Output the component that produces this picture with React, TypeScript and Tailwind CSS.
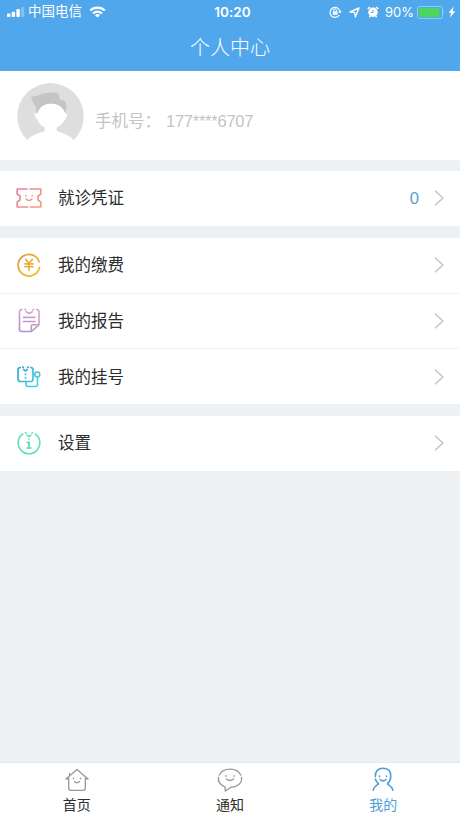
import type { ReactNode } from "react";

function StatusBar() {
  return (
    <div className="flex h-6 items-center justify-between pl-[7px] pr-[4px] text-white">
      <div className="flex flex-1 items-center">
        <svg width="18" height="10" viewBox="0 0 18 10" fill="currentColor">
          <rect x="0" y="6.5" width="3.4" height="3.5" rx="0.8" />
          <rect x="4.7" y="4.7" width="3.4" height="5.3" rx="0.8" />
          <rect x="9.4" y="2" width="3.4" height="8" rx="0.8" />
          <rect x="14.1" y="0" width="3.2" height="10" rx="0.8" opacity="0.3" />
        </svg>
        <span className="ml-[3px] text-[13.5px] leading-none">中国电信</span>
        <svg className="ml-[7px]" width="17" height="12" viewBox="0 0 17 12" fill="none" stroke="currentColor" strokeWidth="2.1">
          <path d="M1.2 4.6a10.4 10.4 0 0 1 14.6 0" />
          <path d="M4 7.5a6.4 6.4 0 0 1 9 0" />
          <path d="M8.5 11.6 6 9.2a3.5 3.5 0 0 1 5 0z" fill="currentColor" stroke="none" />
        </svg>
      </div>
      <span className="pl-[2px] pt-px font-[Inter] text-[13.5px] font-semibold leading-none tracking-[0.1px]">10:20</span>
      <div className="flex flex-1 items-center justify-end">
        <svg width="13" height="12" viewBox="0 0 13 12" fill="none" stroke="currentColor">
          <path d="M10.2 9.2a5 5 0 1 1 .8-3.5" strokeWidth="1.2" />
          <path d="M9.2 5.2h3.6L11 7.6z" fill="currentColor" stroke="none" />
          <rect x="3.7" y="5.2" width="4.8" height="3.6" rx="0.4" fill="currentColor" stroke="none" />
          <path d="M4.8 5.4V4.2a1.3 1.3 0 0 1 2.6 0v1.2" />
        </svg>
        <svg className="ml-[7px]" width="11" height="11" viewBox="0 0 11 11" fill="none" stroke="currentColor" strokeWidth="1.4" strokeLinejoin="round">
          <path d="M10 1 6.4 10 5.6 5.4 1 5z" />
        </svg>
        <svg className="ml-[7px]" width="12" height="12" viewBox="0 0 12 12" fill="none">
          <circle cx="6" cy="6.3" r="4.7" fill="currentColor" />
          <path d="M.8 3 3 1M9 1l2.2 2M2.4 11.2l1-1.2M9.6 11.2l-1-1.2" stroke="currentColor" strokeWidth="1.6" />
          <path d="M6 3.7v2.8H4" stroke="#50a7eb" />
        </svg>
        <span className="ml-[6px] font-[Inter] text-[13px] leading-none">90%</span>
        <svg className="ml-[3px]" width="28" height="13" viewBox="0 0 28 13" fill="none">
          <rect x="0.5" y="0.5" width="25" height="12" rx="2.3" stroke="#8fcdee" />
          <rect x="2" y="2" width="20.5" height="9" rx="1" fill="#4cd65b" />
          <path d="M26.6 4.3q1.4 2.2 0 4.4z" fill="#9fd3ef" />
        </svg>
        <svg className="ml-[3px]" width="8" height="12" viewBox="0 0 8 12" fill="currentColor">
          <path d="M5.7.5.5 6.7h2.6L2 11.5l5.3-6.3H4.6z" />
        </svg>
      </div>
    </div>
  );
}

function Avatar() {
  return (
    <svg className="flex-none" width="67" height="67" viewBox="0 0 67 67">
      <circle cx="33.5" cy="33.3" r="33.2" fill="#dedede" />
      {/* head, neck and shoulders */}
      <path
        d="M19.5 31C21 24 27 20.6 34 20.6S47.5 24 48.5 31L50 30Q50.5 33.5 48.3 36.5C46.5 39.5 43 43 39.7 44.5V48L49 51.5Q54 53.5 57.2 57.5V67H10V57.5Q13.5 53 18.5 51.2L27.7 48V44.5C24 43 21.5 40 20.3 36.5Q17 33.5 17.8 30z"
        fill="#fff"
      />
      <path
        d="M14.3 13.2Q18.5 14.5 23 11.5 31 8.8 40 9.8 43 12.5 42.5 16.6 48.8 16.5 49.4 22 49.5 26.5 48.3 30.5C46.5 24.5 41 20.5 34 20.5S22 24.5 20.5 30.5Q18.3 28 19 23.5 14.5 18.5 14.3 13.2z"
        fill="#c5c5c5"
      />
    </svg>
  );
}

function TicketIcon() {
  return (
    <svg width="26" height="20" viewBox="0 0 26 20" fill="none" stroke="url(#ticket)" strokeWidth="1.7" strokeLinecap="round" strokeLinejoin="round">
      <defs>
        <linearGradient id="ticket" x1="0" y1="0" x2="26" y2="20" gradientUnits="userSpaceOnUse">
          <stop stopColor="#e17fa5" />
          <stop offset="1" stopColor="#f5a27b" />
        </linearGradient>
      </defs>
      <path d="M11 1H1.2v5L4 8v4l-2.8 2v5h10.5M14.5 19h10.3v-5L22 12V8l2.8-2V1H14" />
      <path d="M9.8 7.5v.5M16.2 7.5v.5M10 11q3 3 6 0" strokeWidth="1.4" />
    </svg>
  );
}

function YuanIcon() {
  return (
    <svg width="24" height="24" viewBox="0 0 24 24" fill="none" stroke="url(#yuan)" strokeLinecap="round">
      <defs>
        <linearGradient id="yuan" x1="0" y1="0" x2="24" y2="24" gradientUnits="userSpaceOnUse">
          <stop stopColor="#df9340" />
          <stop offset="1" stopColor="#f2ca32" />
        </linearGradient>
      </defs>
      <path d="M22.2 8.8A10.8 10.8 0 1 0 22.5 14.5" strokeWidth="1.8" />
      <path d="m8.8 6.5 3.2 4 3.2-4M8 10.8h8M8 13.7h8M12 10.8v6.5" strokeWidth="1.7" />
    </svg>
  );
}

function ReportIcon() {
  return (
    <svg width="23" height="25" viewBox="0 0 23 25" fill="none" stroke="url(#report)" strokeWidth="1.6" strokeLinecap="round" strokeLinejoin="round">
      <defs>
        <linearGradient id="report" x1="18" y1="0" x2="6" y2="25" gradientUnits="userSpaceOnUse">
          <stop stopColor="#dfa9c7" />
          <stop offset="1" stopColor="#aa91cc" />
        </linearGradient>
      </defs>
      <path d="M4 1.5Q1.500 1.500 1.500 4v17.500q0 2 2 2h9.800l7.700-6.700V4q0-2.500-2.500-2.500M7 1.300l.5.700M15.500 1.300l-.5.700M8.300 3.700l3 1.800 3-1.800" />
      <path d="M5.500 9.300h11.500M5.500 13.500h11.500" strokeWidth="1.7" />
      <path d="M13.300 23.300V18q0-1.200 1.300-1.200h6" />
    </svg>
  );
}

function RegisterIcon() {
  return (
    <svg width="24" height="22" viewBox="0 0 24 22" fill="none" stroke="url(#register)" strokeWidth="1.7" strokeLinecap="round" strokeLinejoin="round">
      <defs>
        <linearGradient id="register" x1="0" y1="0" x2="22" y2="20" gradientUnits="userSpaceOnUse">
          <stop stopColor="#3b9fd0" />
          <stop offset="1" stopColor="#49d4e2" />
        </linearGradient>
      </defs>
      <path d="M3.3 1.5Q1 1.5 1 4v9q0 2.500 2.500 2.500h10Q16 15.500 16 13V4q0-2.500-2.300-2.500M5.800 1l.5.600M11.200 1l-.5.600M6.800 3.700l1.700 1.300 1.700-1.300M8.500 8v.5M8.500 11.500v.5" />
      <path d="M9 15.500v3q0 2 2 2h7.500q2 0 2-2v-7.200" strokeWidth="1.5" />
      <circle cx="20.3" cy="8.6" r="2.5" strokeWidth="1.5" />
    </svg>
  );
}

function InfoIcon() {
  return (
    <svg width="24" height="24" viewBox="0 0 24 24" fill="none" stroke="#68dfba" strokeWidth="1.6" strokeLinecap="round">
      <path d="M5.700 3a10.900 10.900 0 1 0 12.600 0M8.600 1.500l.4.600M15.400 1.500l-.4.600M10 4.200l2 1.500 2-1.500" />
      <path d="M12 8v.3" strokeWidth="1.6" />
      <path d="M10.500 11.600H12v5.200M10.500 17H13.600" strokeWidth="2" />
    </svg>
  );
}

function HomeIcon() {
  return (
    <svg width="24" height="24" viewBox="0 0 24 24" fill="none" stroke="currentColor" strokeWidth="1.3" strokeLinecap="round" strokeLinejoin="round">
      <path d="M4.500 8V5.500M1 11 12 1.400 23 11M3.700 11.500v8.800q0 2 2 2h12.600q2 0 2-2v-8.800M1 11l2.700-.5M23 11l-2.700-.5" />
      <path d="M8.500 10.300v.5M15.500 10.300v.5M9.500 13.500q2.500 2.300 5 0" strokeWidth="1.4" />
    </svg>
  );
}

function ChatIcon() {
  return (
    <svg width="26" height="24" viewBox="0 0 26 24" fill="none" stroke="currentColor" strokeWidth="1.4" strokeLinecap="round" strokeLinejoin="round">
      <path d="M2.300 7C6-.900 20-.900 23.700 7M1.500 9.500C.8 13.500 3.500 17.500 8 18.800L8.300 23l5.200-3.500C20 19.300 25.500 15 24.500 9.500" />
      <path d="M9 7.700v.5M17 7.700v.5M9.500 11q3.500 3 7 0" strokeWidth="1.5" />
    </svg>
  );
}

function MeIcon() {
  return (
    <svg width="22" height="25" viewBox="0 0 22 25" fill="none" stroke="currentColor" strokeWidth="1.6" strokeLinecap="round" strokeLinejoin="round">
      <path d="M3.300 9.500C3.300 4.500 5 1.200 11 1.200s8 3.300 7.700 8.300c0 3-1.200 5.500-3.200 7.300l3.200 2.700q1.600 1.500 2.100 3.700M3.400 12q.6 2.800 3.100 4.800l-3.200 2.700Q1.500 21 1.200 23.200" />
      <path d="M7.500 9v.7M14.500 9v.7M8 12.500q3 2.800 6 0" strokeWidth="1.5" />
    </svg>
  );
}

type MenuRowProps = {
  icon: ReactNode;
  label: string;
  count?: number;
};

function MenuRow({ icon, label, count }: MenuRowProps) {
  return (
    <div className="flex h-[54.67px] items-center bg-white px-4">
      <span className="flex w-[26px] justify-center">{icon}</span>
      <span className="ml-4 text-[16.5px] leading-6 text-[#2d2d2d]">{label}</span>
      <span className="ml-auto mr-[15px] text-[16.5px] text-[#559fd2]">{count}</span>
      <svg width="10" height="16" viewBox="0 0 10 16" fill="none" stroke="#c2c2c5" strokeWidth="1.4">
        <path d="m1 .7 8 7.3-8 7.3" />
      </svg>
    </div>
  );
}

const tabs = [
  { label: "首页", icon: <HomeIcon />, active: false },
  { label: "通知", icon: <ChatIcon />, active: false },
  { label: "我的", icon: <MeIcon />, active: true },
];

export default function App() {
  return (
    <div className="flex h-[818px] w-[460px] flex-col overflow-hidden bg-[#edf1f4] font-['Liberation_Sans','Noto_Sans_CJK_SC',sans-serif]">
      <header className="h-[71px] flex-none bg-[#50a7eb]">
        <StatusBar />
        <h1 className="pt-[10px] text-center text-[20px] font-light leading-[29px] text-white">个人中心</h1>
      </header>

      <div className="flex h-[89px] flex-none bg-white pl-[17px] pt-3">
        <Avatar />
        <p className="ml-[11px] mt-[26px] flex whitespace-nowrap text-[16.5px] leading-6 text-[#c4c4c4]">
          <span className="w-[71px]">手机号：</span>
          <span className="tracking-[-0.25px]">177****6707</span>
        </p>
      </div>

      <div className="mt-[11px]">
        <MenuRow icon={<TicketIcon />} label="就诊凭证" count={0} />
      </div>

      <div className="mt-[12.33px] flex flex-col gap-px bg-[#f1f2f4]">
        <MenuRow icon={<YuanIcon />} label="我的缴费" />
        <MenuRow icon={<ReportIcon />} label="我的报告" />
        <MenuRow icon={<RegisterIcon />} label="我的挂号" />
      </div>

      <div className="mt-3">
        <MenuRow icon={<InfoIcon />} label="设置" />
      </div>

      <nav className="mt-auto flex h-14 flex-none border-t border-[#e6e9eb] bg-white">
        {tabs.map((tab) => (
          <div
            key={tab.label}
            className={`flex flex-1 flex-col items-center pt-1 ${tab.active ? "text-[#4d9fd3]" : "text-[#999]"}`}
          >
            <span className="flex h-[26px] items-center">{tab.icon}</span>
            <span className={`text-[14px] leading-[26px] ${tab.active ? "" : "text-[#2d2d2d]"}`}>{tab.label}</span>
          </div>
        ))}
      </nav>
    </div>
  );
}
